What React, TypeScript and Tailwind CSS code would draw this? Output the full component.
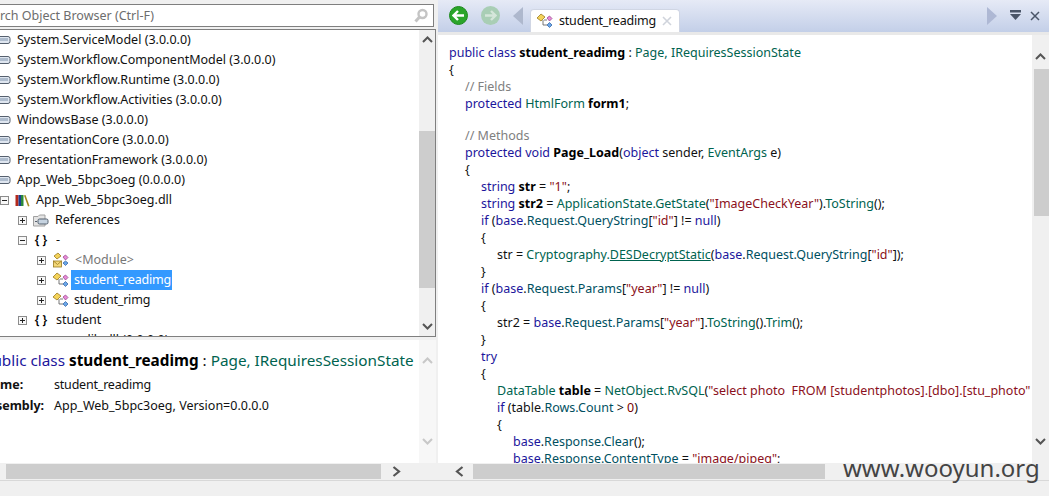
import React from "react";

type Tok = [string, string];
const cls: Record<string, string> = {
  k: "text-[#1c169c]",
  t: "text-[#00634f]",
  m: "text-[#00505f]",
  s: "text-[#8b1020]",
  c: "text-[#808080]",
  b: "font-bold text-black",
  p: "text-[#111111]",
  u: "text-[#00634f] underline",
  n: "text-[#7a0000]",
};

const code: [number, Tok[]][] = [
  [0, [["k", "public class "], ["b", "student_readimg"], ["p", " : "], ["t", "Page, IRequiresSessionState"]]],
  [0, [["p", "{"]]],
  [1, [["c", "// Fields"]]],
  [1, [["k", "protected "], ["t", "HtmlForm "], ["b", "form1"], ["p", ";"]]],
  [1, []],
  [1, [["c", "// Methods"]]],
  [1, [["k", "protected void "], ["b", "Page_Load"], ["p", "("], ["k", "object "], ["p", "sender, "], ["t", "EventArgs "], ["p", "e)"]]],
  [1, [["p", "{"]]],
  [2, [["k", "string "], ["b", "str"], ["p", " = "], ["s", "\"1\""], ["p", ";"]]],
  [2, [["k", "string "], ["b", "str2"], ["p", " = "], ["t", "ApplicationState.GetState"], ["p", "("], ["s", "\"ImageCheckYear\""], ["p", ")."], ["t", "ToString"], ["p", "();"]]],
  [2, [["k", "if "], ["p", "("], ["k", "base"], ["p", "."], ["m", "Request.QueryString"], ["p", "["], ["s", "\"id\""], ["p", "] != "], ["k", "null"], ["p", ")"]]],
  [2, [["p", "{"]]],
  [3, [["p", "str = "], ["t", "Cryptography."], ["u", "DESDecryptStatic"], ["p", "("], ["k", "base"], ["p", "."], ["m", "Request.QueryString"], ["p", "["], ["s", "\"id\""], ["p", "]);"]]],
  [2, [["p", "}"]]],
  [2, [["k", "if "], ["p", "("], ["k", "base"], ["p", "."], ["m", "Request.Params"], ["p", "["], ["s", "\"year\""], ["p", "] != "], ["k", "null"], ["p", ")"]]],
  [2, [["p", "{"]]],
  [3, [["p", "str2 = "], ["k", "base"], ["p", "."], ["m", "Request.Params"], ["p", "["], ["s", "\"year\""], ["p", "]."], ["t", "ToString"], ["p", "()."], ["t", "Trim"], ["p", "();"]]],
  [2, [["p", "}"]]],
  [2, [["k", "try"]]],
  [2, [["p", "{"]]],
  [3, [["t", "DataTable "], ["b", "table"], ["p", " = "], ["t", "NetObject.RvSQL"], ["p", "("], ["s", "\"select photo  FROM [studentphotos].[dbo].[stu_photo\""]]],
  [3, [["k", "if "], ["p", "(table."], ["m", "Rows.Count"], ["p", " > "], ["n", "0"], ["p", ")"]]],
  [3, [["p", "{"]]],
  [4, [["k", "base"], ["p", "."], ["m", "Response.Clear"], ["p", "();"]]],
  [4, [["k", "base"], ["p", "."], ["m", "Response.ContentType"], ["p", " = "], ["s", "\"image/pjpeg\""], ["p", ";"]]],
];

const indent = ["pl-0", "pl-4", "pl-8", "pl-12", "pl-16"];

function Up({ c = "#555555" }: { c?: string }) {
  return (
    <svg width="11" height="7" viewBox="0 0 11 7" fill="none">
      <path d="M1 6 L5.5 1.5 L10 6" stroke={c} strokeWidth="2" />
    </svg>
  );
}
function Down({ c = "#555555" }: { c?: string }) {
  return (
    <svg width="11" height="7" viewBox="0 0 11 7" fill="none">
      <path d="M1 1 L5.5 5.5 L10 1" stroke={c} strokeWidth="2" />
    </svg>
  );
}
function Left() {
  return (
    <svg width="9" height="11" viewBox="0 0 9 11" fill="none">
      <path d="M7.5 1 L2 5.5 L7.5 10" stroke="#555555" strokeWidth="2.2" />
    </svg>
  );
}
function Right() {
  return (
    <svg width="9" height="11" viewBox="0 0 9 11" fill="none">
      <path d="M1.5 1 L7 5.5 L1.5 10" stroke="#555555" strokeWidth="2.2" />
    </svg>
  );
}

function Box({ open }: { open?: boolean }) {
  return (
    <svg width="9" height="9" viewBox="0 0 9 9" className="shrink-0">
      <rect x="0.5" y="0.5" width="8" height="8" fill="#f8f8f8" stroke="#8c8c8c" />
      <path d={open ? "M2 4.5 H7" : "M2 4.5 H7 M4.5 2 V7"} stroke="#222222" />
    </svg>
  );
}

function AsmIcon() {
  return (
    <svg width="14" height="10" viewBox="0 0 14 10" className="shrink-0 -ml-[3px]">
      <rect x="1" y="1.5" width="12" height="7" rx="2" fill="#dfe6f0" stroke="#55606e" />
      <rect x="3" y="3" width="8" height="3" fill="#aebccd" />
    </svg>
  );
}

function ClassIcon() {
  return (
    <svg width="17" height="16" viewBox="0 0 17 16" className="shrink-0">
      <path d="M1 5 L5 1 L9 4 L5 8 Z" fill="#f4d35a" stroke="#9a7a20" strokeWidth="0.8" />
      <path d="M11 5 L13.5 3 L16 5.5 L13.5 8 Z" fill="#e78ad8" stroke="#9a4a90" strokeWidth="0.8" />
      <path d="M11 12 L13.5 9.5 L16 12 L13.5 14.5 Z" fill="#6aa6e8" stroke="#3a6aa8" strokeWidth="0.8" />
      <path d="M7 7 V12 H11 M8 7 H11" stroke="#555555" strokeWidth="0.8" fill="none" />
    </svg>
  );
}

function ModuleIcon() {
  return (
    <svg width="17" height="16" viewBox="0 0 17 16" className="shrink-0">
      <path d="M2 4 L6 1 L9 4 L5 7 Z" fill="#f4d35a" stroke="#9a7a20" strokeWidth="0.8" />
      <rect x="1.5" y="9" width="8" height="6" fill="#f4d97a" stroke="#9a7a20" strokeWidth="0.8" />
      <path d="M1.5 9 L5.5 12.5 L9.5 9" fill="none" stroke="#9a7a20" strokeWidth="0.8" />
      <path d="M11 5 L13.5 3 L16 5.5 L13.5 8 Z" fill="#e78ad8" stroke="#9a4a90" strokeWidth="0.8" />
      <path d="M11 11 L13.5 9 L16 11 L13.5 13.5 Z" fill="#6aa6e8" stroke="#3a6aa8" strokeWidth="0.8" />
    </svg>
  );
}

function LibIcon() {
  return (
    <svg width="15" height="13" viewBox="0 0 15 13" className="shrink-0">
      <rect x="0.5" y="1" width="3" height="11" fill="#b52a1c" />
      <rect x="3.5" y="1" width="2.5" height="11" fill="#1c3f94" />
      <rect x="6" y="1" width="2.5" height="11" fill="#2a8a3a" />
      <path d="M9 1.5 L10.5 1 L14.5 12 L13 12.5 Z" fill="#a58a20" />
    </svg>
  );
}

function RefIcon() {
  return (
    <svg width="16" height="13" viewBox="0 0 16 13" className="shrink-0">
      <path d="M0.5 2.5 H5 L6.5 1 H12 V12 H0.5 Z" fill="#e4e4e4" stroke="#a0a0a0" />
      <rect x="5" y="5" width="10" height="5" rx="1.5" fill="#c6d3e0" stroke="#55606e" />
      <path d="M2 7.5 H4" stroke="#55606e" />
    </svg>
  );
}

function Braces() {
  return <span className="w-[16px] shrink-0 text-center font-semibold text-[12px] text-black">{"{ }"}</span>;
}

function Row({ pad, children }: { pad: string; children: React.ReactNode }) {
  return <div className={`h-5 flex items-center whitespace-nowrap ${pad}`}>{children}</div>;
}

const assemblies = [
  "System.ServiceModel (3.0.0.0)",
  "System.Workflow.ComponentModel (3.0.0.0)",
  "System.Workflow.Runtime (3.0.0.0)",
  "System.Workflow.Activities (3.0.0.0)",
  "WindowsBase (3.0.0.0)",
  "PresentationCore (3.0.0.0)",
  "PresentationFramework (3.0.0.0)",
  "App_Web_5bpc3oeg (0.0.0.0)",
];

export default function App() {
  return (
    <div
      className="relative w-[1049px] h-[496px] overflow-hidden bg-[#f0f0f0] flex flex-col text-[12.5px] text-[#111111]"
      style={{ fontFamily: '"Noto Sans", "Noto Sans CJK SC", sans-serif' }}
    >
      <div className="flex h-[463px]">
        {/* left */}
        <div className="w-[438px] flex flex-col shrink-0">
          <div className="mt-[4px] h-[23px] w-[434px] border border-l-0 border-[#7f7f7f] bg-white flex items-center justify-between overflow-hidden pr-[4px]">
            <span className="ml-[-21px] pt-[1px] text-[#6d6d6d] whitespace-nowrap">Search Object Browser (Ctrl-F)</span>
            <svg width="16" height="16" viewBox="0 0 16 16" fill="none">
              <circle cx="9.5" cy="6" r="4" stroke="#c4c4c4" strokeWidth="2.4" />
              <path d="M6.5 9 L2.5 13.5" stroke="#c4c4c4" strokeWidth="3" />
            </svg>
          </div>
          <div className="mt-[2px] h-[308px] w-[436px] border border-l-0 border-[#7f7f7f] bg-white flex overflow-hidden">
            <div className="flex-1 overflow-hidden h-[306px]">
              {assemblies.map((a) => (
                <Row key={a} pad="gap-[6px]">
                  <AsmIcon />
                  <span>{a}</span>
                </Row>
              ))}
              <Row pad="gap-[6px]">
                <Box open />
                <LibIcon />
                <span>App_Web_5bpc3oeg.dll</span>
              </Row>
              <Row pad="pl-[18px] gap-[6px]">
                <Box />
                <RefIcon />
                <span>References</span>
              </Row>
              <Row pad="pl-[18px] gap-[6px]">
                <Box open />
                <Braces />
                <span className="ml-[1px]">-</span>
              </Row>
              <Row pad="pl-[37px] gap-[6px]">
                <Box />
                <ModuleIcon />
                <span className="text-[#777777]">{"<Module>"}</span>
              </Row>
              <Row pad="pl-[37px] gap-[6px]">
                <Box />
                <ClassIcon />
                <span className="bg-[#3399ff] text-white pl-[3px] w-[101px] h-5 leading-5 -ml-[4px] tracking-[-0.2px]">student_readimg</span>
              </Row>
              <Row pad="pl-[37px] gap-[6px]">
                <Box />
                <ClassIcon />
                <span className="-ml-[1px] tracking-[-0.2px]">student_rimg</span>
              </Row>
              <Row pad="pl-[18px] gap-[6px]">
                <Box />
                <Braces />
                <span className="ml-[1px]">student</span>
              </Row>
              <Row pad="pl-[51px]">
                <span>mscorlib.dll (0.0.0.0)</span>
              </Row>
            </div>
            <div className="w-[16px] shrink-0 bg-[#f0f0f0] flex flex-col items-center">
              <div className="h-[19px] flex items-center justify-center"><Up /></div>
              <div className="h-[82px]" />
              <div className="w-full h-[157px] bg-[#cdcdcd]" />
              <div className="flex-1" />
              <div className="h-[19px] flex items-center justify-center"><Down /></div>
            </div>
          </div>
          <div className="mt-[3px] flex-1 w-[436px] bg-white flex overflow-hidden">
            <div className="flex-1 overflow-hidden pt-[10px]">
              <div className="h-[22px] text-[15.3px] leading-[20px] whitespace-nowrap ml-[-17px]">
                <span className="text-[#1c169c]">public class </span>
                <span className="font-bold text-black">student_readimg</span>
                <span> : </span>
                <span className="text-[#00634f]">Page, IRequiresSessionState</span>
              </div>
              <div className="mt-[3px] h-5 flex items-center whitespace-nowrap">
                <span className="w-[54px] font-bold text-right shrink-0 pr-[31px]">me:</span>
                <span className="tracking-[-0.2px]">student_readimg</span>
              </div>
              <div className="h-5 mt-[1px] flex items-center whitespace-nowrap">
                <span className="w-[54px] font-bold shrink-0 ml-[-19px] mr-[19px]">Assembly:</span>
                <span>App_Web_5bpc3oeg, Version=0.0.0.0</span>
              </div>
            </div>
            <div className="w-[17px] shrink-0 bg-[#f7f7f7] flex flex-col items-center justify-between pt-[17px] pb-[18px]">
              <Up c="#c8c8c8" />
              <Down c="#c8c8c8" />
            </div>
          </div>
        </div>

        {/* right */}
        <div className="flex-1 flex flex-col min-w-0">
          <div className="h-[32px] shrink-0 bg-gradient-to-b from-[#e6eaf6] to-[#c3cfe8] flex items-end">
            <div className="self-center ml-[11px] w-[19px] h-[19px] rounded-full bg-[#2aa52a] border border-[#1d8a1d] flex items-center justify-center mb-[1px]">
              <svg width="13" height="11" viewBox="0 0 13 11" fill="none">
                <path d="M6 1 L1.5 5.5 L6 10 M2 5.5 H12" stroke="#ffffff" strokeWidth="2.4" />
              </svg>
            </div>
            <div className="self-center ml-[13px] w-[19px] h-[19px] rounded-full bg-[#a9ceb5] flex items-center justify-center mb-[1px]">
              <svg width="13" height="11" viewBox="0 0 13 11" fill="none">
                <path d="M7 1 L11.5 5.5 L7 10 M1 5.5 H11" stroke="#d5e6da" strokeWidth="2.4" />
              </svg>
            </div>
            <svg width="10" height="18" viewBox="0 0 10 18" className="self-center ml-[13px] mb-[1px]">
              <path d="M10 0 V18 L0 9 Z" fill="#aeb8cd" />
            </svg>
            <div className="ml-[7px] w-[150px] h-[23px] bg-white rounded-t-[4px] border border-b-0 border-[#d0d6e4] flex items-center pl-[5px] gap-[6px]">
              <ClassIcon />
              <span className="text-[#111111] tracking-[-0.2px]">student_readimg</span>
              <svg width="10" height="10" viewBox="0 0 10 10">
                <path d="M1 1 L9 9 M9 1 L1 9" stroke="#d0d4dc" strokeWidth="1.6" />
              </svg>
            </div>
            <div className="flex-1" />
            <svg width="10" height="18" viewBox="0 0 10 18" className="self-center mb-[1px]">
              <path d="M0 0 V18 L10 9 Z" fill="#aeb8d4" />
            </svg>
            <svg width="11" height="12" viewBox="0 0 11 12" className="self-center ml-[13px]">
              <rect x="0" y="0" width="11" height="2.5" fill="#4a5568" />
              <path d="M0 4 H11 L5.5 10 Z" fill="#4a5568" />
            </svg>
            <svg width="10" height="10" viewBox="0 0 10 10" className="self-center ml-[9px] mr-[9px]">
              <path d="M1 1 L9 9 M9 1 L1 9" stroke="#4a5568" strokeWidth="1.5" />
            </svg>
          </div>
          <div className="h-[3px] shrink-0 bg-[#e9e9e9]" />
          <div className="flex-1 min-h-0 flex bg-white">
            <div className="flex-1 min-w-0 overflow-hidden pl-[11px] pt-[9px]">
              {code.map(([lvl, toks], i) => (
                <div
                  key={i}
                  className={`${toks.length === 0 ? "h-[15px]" : "h-[17px]"} leading-[17px] whitespace-nowrap ${indent[lvl]}`}
                >
                  {toks.map(([k, v], j) => (
                    <span key={j} className={`whitespace-pre ${cls[k]}`}>{v}</span>
                  ))}
                </div>
              ))}
            </div>
            <div className="w-[17px] shrink-0 bg-[#f0f0f0] flex flex-col items-center">
              <div className="h-[34px] flex items-center justify-center pt-[8px]"><Up /></div>
              <div className="ml-[1px] w-[15px] h-[147px] bg-[#cdcdcd]" />
              <div className="flex-1 flex items-end justify-center pb-[18px]"><Down /></div>
            </div>
          </div>
        </div>
      </div>

      {/* horizontal scrollbars */}
      <div className="h-[17px] flex shrink-0">
        <div className="w-[438px] flex items-center">
          <div className="ml-[6px] w-[375px] h-[15px] bg-[#cdcdcd]" />
          <div className="ml-[11px]"><Right /></div>
        </div>
        <div className="flex-1 flex items-center">
          <div className="ml-[17px]"><Left /></div>
          <div className="ml-[9px] w-[352px] h-[15px] bg-[#cdcdcd]" />
        </div>
      </div>
      <div className="flex-1 border-t border-[#d8d8d8] bg-[#f0f0f0]" />

      {/* watermark */}
      <div className="absolute left-[843px] top-[452px] text-[24px] leading-[32px] text-[#444444] whitespace-nowrap">
        www.wooyun.org
      </div>
    </div>
  );
}
